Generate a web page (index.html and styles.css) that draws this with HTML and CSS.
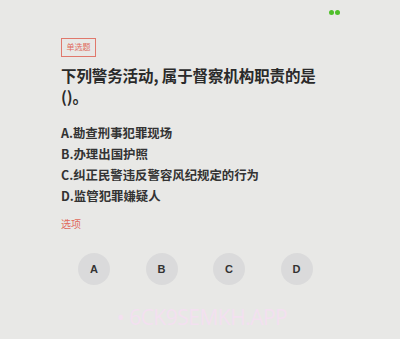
FILE: index.html
```html
<!DOCTYPE html>
<html lang="zh-CN">
<head>
<meta charset="utf-8">
<title>单选题</title>
<link rel="stylesheet" href="styles.css">
</head>
<body>
<div class="page">
  <div class="topbar"><span class="dot"></span><span class="dot"></span></div>
  <div class="content">
    <div class="tag">单选题</div>
    <div class="title">下列警务活动, 属于督察机构职责的是()。</div>
    <div class="options">
      <div class="opt">A.勘查刑事犯罪现场</div>
      <div class="opt">B.办理出国护照</div>
      <div class="opt">C.纠正民警违反警容风纪规定的行为</div>
      <div class="opt">D.监管犯罪嫌疑人</div>
    </div>
    <div class="choose">选项</div>
    <div class="buttons">
      <div class="btn">A</div>
      <div class="btn">B</div>
      <div class="btn">C</div>
      <div class="btn">D</div>
    </div>
  </div>
  <div class="watermark">• 6CK9SEMKH.APP</div>
</div>
</body>
</html>
```
FILE: styles.css
```css
html, body {
  margin: 0;
  padding: 0;
  background: #e8e8e6;
}
.page {
  width: 400px;
  height: 339px;
  overflow: hidden;
  font-family: "Noto Sans CJK SC", "Noto Sans", sans-serif;
  color: #2b2b2b;
}
.topbar {
  height: 10px;
  padding-top: 10px;
  display: flex;
  justify-content: flex-end;
  gap: 1px;
  padding-right: 60px;
}
.dot {
  width: 5px;
  height: 5px;
  border-radius: 50%;
  background: #4fbf2a;
}
.content {
  padding-left: 61px;
  padding-right: 20px;
}
.tag {
  margin-top: 18px;
  display: inline-block;
  box-sizing: border-box;
  width: 35px;
  height: 19px;
  border: 1.5px solid #e0786c;
  color: #e06a5c;
  font-size: 8px;
  line-height: 16px;
  text-align: center;
}
.title {
  margin-top: 8px;
  width: 265px;
  font-size: 15.5px;
  line-height: 21px;
  font-weight: 700;
  color: #2a2a2a;
  letter-spacing: -0.1px;
}
.options {
  margin-top: 16px;
}
.opt {
  font-size: 12.4px;
  line-height: 21px;
  font-weight: 700;
  color: #333;
}
.choose {
  margin-top: 10px;
  font-size: 10px;
  line-height: 14px;
  color: #e06a5c;
}
.buttons {
  margin-top: 22px;
  margin-left: 17px;
  display: flex;
  gap: 35.5px;
}
.btn {
  width: 32px;
  height: 32px;
  border-radius: 50%;
  background: #dadadb;
  display: flex;
  align-items: center;
  justify-content: center;
  font-family: "Liberation Sans", Arial, sans-serif;
  font-weight: 700;
  font-size: 11px;
  color: #333;
}
.watermark {
  margin-top: 19px;
  text-align: center;
  font-family: "Open Sans", sans-serif;
  font-size: 21px;
  line-height: 26px;
  letter-spacing: -0.5px;
  color: #f3e0f0;
  padding-left: 4px;
}
```
